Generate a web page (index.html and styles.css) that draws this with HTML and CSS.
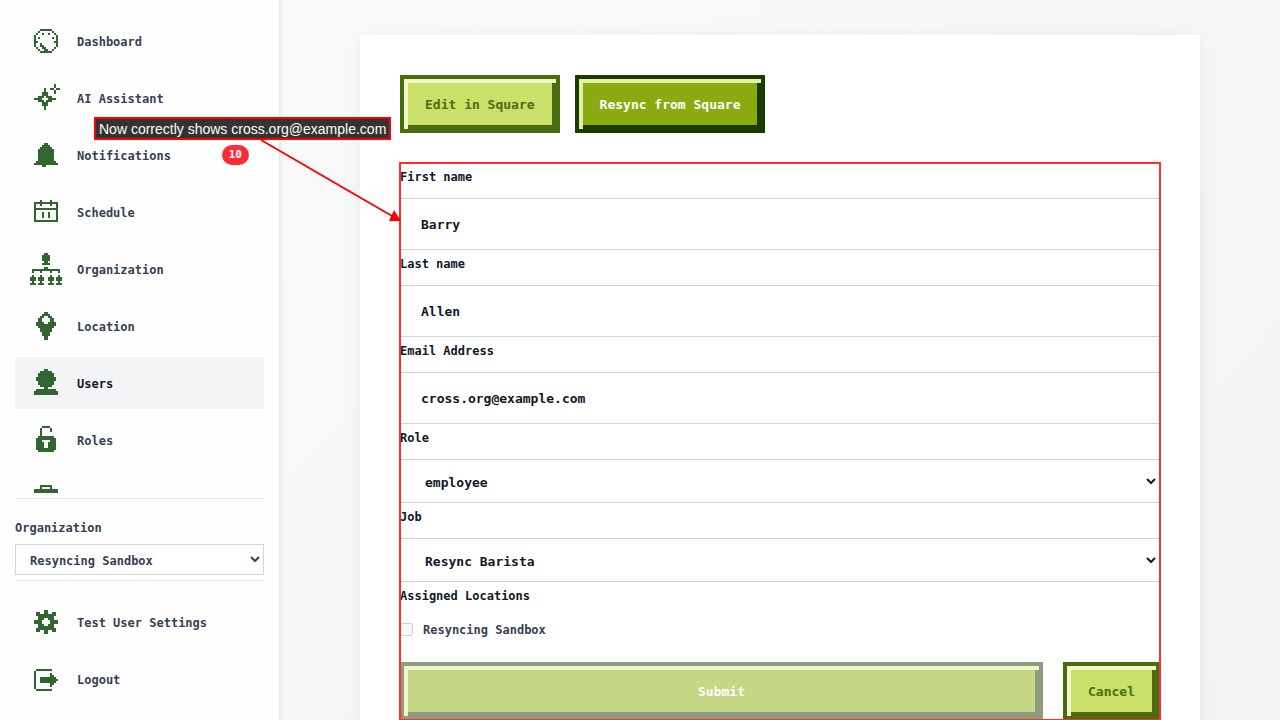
FILE: index.html
```html
<!DOCTYPE html>
<html lang="en">
<head>
    <meta charset="UTF-8">
    <meta name="viewport" content="width=device-width, initial-scale=1.0">
    <title>Edit User</title>
    <link rel="stylesheet" href="styles.css">
</head>
<body>
    <div class="app">
        <!-- Sidebar -->
        <aside class="sidebar">
            <nav class="nav-list">
                <a class="nav-item" href="#">
                    <svg class="icon" viewBox="0 0 16 16"><path d="M5 2h6v1H5zM4 3h1v1H4zM3 4h1v1H3zM11 3h1v1h-1zM12 4h1v1h-1zM2 5h1v6H2zM13 5h1v6h-1zM3 11h1v1H3zM12 11h1v1h-1zM4 12h1v1H4zM11 12h1v1h-1zM5 13h6v1H5zM6 4h1v1H6zM9 4h1v1H9zM4 6h1v1H4zM11 6h1v1h-1zM3 8h1v1H3zM12 8h1v1h-1zM5 9h1v1H5zM5 10h2v1H5zM6 11h2v1H6zM7 12h2v1H7z"/></svg>
                    <span class="nav-text">Dashboard</span>
                </a>
                <a class="nav-item" href="#">
                    <svg class="icon" viewBox="0 0 16 16"><path d="M12 1h1v2h-1zM10 3h2v1h-2zM13 3h2v1h-2zM12 4h1v2h-1zM7 3h1v2H7zM6 5h3v2H6zM4 7h3v1H4zM8 7h3v1H8zM2 8h4v1H2zM9 8h4v1H9zM4 9h3v1H4zM8 9h3v1H8zM6 10h3v2H6zM7 12h1v2H7z"/></svg>
                    <span class="nav-text">AI Assistant</span>
                </a>
                <a class="nav-item" href="#">
                    <svg class="icon" viewBox="0 0 16 16"><path d="M7 2h2v1H7zM6 3h4v1H6zM5 4h6v1H5zM4 5h8v6H4zM3 11h10v1H3zM2 12h12v1H2zM6 13h2v1H6z"/></svg>
                    <span class="nav-text">Notifications</span>
                    <span class="badge">10</span>
                </a>
                <a class="nav-item" href="#">
                    <svg class="icon" viewBox="0 0 16 16"><path d="M2 3h12v1H2zM2 4h1v9H2zM13 4h1v9h-1zM3 12h10v1H3zM3 6h10v1H3zM5 2h1v3H5zM10 2h1v3h-1zM6 8h1v3H6zM9 8h1v3H9z"/></svg>
                    <span class="nav-text">Schedule</span>
                </a>
                <a class="nav-item" href="#">
                    <svg class="icon" viewBox="0 0 16 16"><path d="M7 0h2v1H7zM6 1h4v3H6zM7 4h2v1H7zM6 5h4v1H6zM7 7h2v1H7zM1 8h14v1H1zM1 9h1v1H1zM5 9h1v1H5zM10 9h1v1h-1zM14 9h1v1h-1zM1 11h1v1H1zM5 11h1v1H5zM10 11h1v1h-1zM14 11h1v1h-1zM0 12h3v2H0zM4 12h3v2H4zM9 12h3v2H9zM13 12h3v2h-3zM1 14h1v1H1zM5 14h1v1H5zM10 14h1v1h-1zM14 14h1v1h-1zM0 15h3v1H0zM4 15h3v1H4zM9 15h3v1H9zM13 15h3v1h-3z"/></svg>
                    <span class="nav-text">Organization</span>
                </a>
                <a class="nav-item" href="#">
                    <svg class="icon" viewBox="0 0 16 16"><path d="M7 1h2v1H7zM6 2h4v1H6zM5 3h2v1H5zM9 3h2v1H9zM4 4h2v2H4zM10 4h2v2h-2zM3 6h4v1H3zM9 6h4v1H9zM3 7h10v1H3zM4 8h8v1H4zM5 9h6v2H5zM6 11h4v2H6zM7 13h2v2H7z"/></svg>
                    <span class="nav-text">Location</span>
                </a>
                <a class="nav-item active" href="#">
                    <svg class="icon" viewBox="0 0 16 16"><path d="M7 1h2v1H7zM5 2h6v1H5zM4 3h8v2H4zM3 5h10v2H3zM4 7h8v2H4zM5 9h6v1H5zM7 10h2v1H7zM3 11h10v1H3zM2 12h12v2H2z"/></svg>
                    <span class="nav-text">Users</span>
                </a>
                <a class="nav-item" href="#">
                    <svg class="icon" viewBox="0 0 16 16"><path d="M6 1h4v1H6zM5 2h1v4H5zM10 2h1v2h-1zM4 6h8v1H4zM3 7h10v1H3zM3 8h3v5H3zM10 8h3v5h-3zM6 9h1v4H6zM9 9h1v4H9zM7 12h2v1H7zM4 13h8v1H4z"/></svg>
                    <span class="nav-text">Roles</span>
                </a>
                <a class="nav-item" href="#">
                    <svg class="icon" viewBox="0 0 16 16"><path d="M5 2h6v1H5zM5 3h1v1H5zM10 3h1v1h-1zM2 4h12v9H2z"/></svg>
                </a>
            </nav>

            <div class="org-switch">
                <label for="organization">Organization</label>
                <select id="organization">
                    <option>Resyncing Sandbox</option>
                </select>
            </div>

            <nav class="account">
                <a class="nav-item" href="#">
                    <svg class="icon" viewBox="0 0 16 16"><path fill-rule="evenodd" d="M7 2h2v2h2v-1h2v2h-1v2h2v2h-2v2h1v2h-2v-1H9v2H7v-2H5v1H3v-2h1V9H2V7h2V5H3V3h2v1h2zM7 6v1H6v2h1v1h2V9h1V7H9V6z"/></svg>
                    <span class="nav-text">Test User Settings</span>
                </a>
                <a class="nav-item" href="#">
                    <svg class="icon" viewBox="0 0 16 16"><path d="M3 3h8v1H3zM2 4h1v9H2zM3 13h8v1H3zM5 7h5v3H5zM10 5h1v7h-1zM11 6h1v5h-1zM12 7h1v3h-1zM13 8h1v1h-1z"/></svg>
                    <span class="nav-text">Logout</span>
                </a>
            </nav>
        </aside>

        <!-- User form -->
        <main class="content">
            <section class="card">
                <div class="actions">
                    <button class="btn btn-light" type="button">Edit in Square</button>
                    <button class="btn btn-primary" type="button">Resync from Square</button>
                </div>

                <form class="user-form">
                    <label class="field-label" for="firstName">First name</label>
                    <input class="field" id="firstName" type="text" value="Barry">

                    <label class="field-label" for="lastName">Last name</label>
                    <input class="field" id="lastName" type="text" value="Allen">

                    <label class="field-label" for="email">Email Address</label>
                    <input class="field" id="email" type="text" value="cross.org@example.com">

                    <label class="field-label" for="role">Role</label>
                    <select class="field" id="role">
                        <option>employee</option>
                    </select>

                    <label class="field-label" for="job">Job</label>
                    <select class="field" id="job">
                        <option>Resync Barista</option>
                    </select>

                    <div class="field-label">Assigned Locations</div>
                    <div class="check-row">
                        <input id="sandbox" type="checkbox" disabled>
                        <label for="sandbox">Resyncing Sandbox</label>
                    </div>

                    <div class="form-buttons">
                        <button class="btn btn-primary submit" type="submit" disabled>Submit</button>
                        <button class="btn btn-light" type="button">Cancel</button>
                    </div>
                </form>
            </section>
        </main>
    </div>

    <!-- Callout -->
    <div class="callout">Now correctly shows cross.org@example.com</div>
    <svg class="callout-arrow" viewBox="0 0 142 84">
        <path d="M1 1L132 77" stroke="#ff0000" stroke-width="2"/>
        <path d="M141 82L134 71L129 82z" fill="#ff0000"/>
    </svg>
</body>
</html>
```
FILE: styles.css
```css
* {
    box-sizing: border-box;
}

body {
    margin: 0;
    font-family: "DejaVu Sans Mono", "Liberation Mono", monospace;
    font-size: 12px;
    font-weight: bold;
    color: #364153;
}

.app {
    display: flex;
    height: 100vh;
    overflow: hidden;
    background: linear-gradient(135deg, #f9fafb, #f3f4f6);
}

/* Sidebar */
.sidebar {
    display: flex;
    flex-direction: column;
    flex: 0 0 280px;
    padding: 15px;
    background: #fefefe;
    border-right: 1px solid #e5e7eb;
    box-shadow: 1px 0 4px rgba(0, 0, 0, 0.08);
}

.nav-list,
.account {
    display: flex;
    flex-direction: column;
    gap: 5px;
}

.nav-list {
    flex: 1;
    min-height: 0;
    margin-bottom: 5px;
    overflow: hidden;
}

.nav-item {
    display: flex;
    flex-shrink: 0;
    align-items: center;
    gap: 15px;
    height: 52px;
    padding: 0 15px;
    color: #364153;
    text-decoration: none;
}

.nav-item.active {
    background: #f3f4f6;
    color: #101828;
}

.nav-text {
    padding-top: 2px;
}

.icon {
    width: 32px;
    height: 32px;
    fill: #326531;
    shape-rendering: crispEdges;
}

.badge {
    margin-left: auto;
    padding: 0 7px;
    border-radius: 10px;
    background: #fb2c36;
    color: #fff;
    font-size: 11px;
    line-height: 20px;
}

.org-switch {
    display: flex;
    flex-direction: column;
    padding: 20px 0 5px;
    border-top: 1px solid #e5e7eb;
    border-bottom: 1px solid #e5e7eb;
}

.org-switch label {
    margin-bottom: 7px;
    line-height: 18px;
}

.org-switch select {
    height: 31px;
    padding: 2px 10px 0;
    border: 1px solid #d1d5dc;
    background: #fff;
    color: #364153;
    font: inherit;
}

.account {
    padding-top: 15px;
}

/* Card */
.content {
    flex: 1;
    min-width: 0;
    padding: 35px 80px;
}

.card {
    padding: 40px;
    background: #fff;
    box-shadow: 0 4px 20px rgba(0, 0, 0, 0.06);
}

.actions {
    display: flex;
    gap: 15px;
    margin-bottom: 30px;
}

.btn {
    height: 58px;
    padding: 0 21px;
    border: 4px solid;
    font-family: inherit;
    font-size: 13px;
    font-weight: bold;
}

.btn-light {
    border-color: #496c10;
    background: #c9e069;
    color: #496c10;
    box-shadow: inset 4px 4px #f0f9c8, inset -4px -4px #496c10;
}

.btn-primary {
    border-color: #1b3a00;
    background: #8aab10;
    color: #fff;
    box-shadow: inset 4px 4px #e0efa0, inset -4px -4px #1b3a00;
}

/* Form */
.user-form {
    position: relative;
    display: flex;
    flex-direction: column;
    color: #101828;
}

.user-form::after {
    content: "";
    position: absolute;
    inset: -1px;
    border: 2px solid #ff2d2d;
    pointer-events: none;
}

.field-label {
    height: 35px;
    line-height: 28px;
}

.field {
    width: 100%;
    height: 52px;
    padding: 0 20px;
    border: 1px solid #d1d5dc;
    border-radius: 0;
    background: #fff;
    color: #101828;
    font-family: inherit;
    font-size: 13px;
    font-weight: bold;
}

select.field {
    height: 44px;
    padding-top: 2px;
}

.check-row {
    display: flex;
    align-items: center;
    gap: 10px;
    height: 25px;
    margin-bottom: 20px;
    color: #364153;
}

.check-row input {
    width: 13px;
    height: 13px;
    margin: 0;
}

.form-buttons {
    display: flex;
    gap: 20px;
}

.submit {
    flex: 1;
    border-color: #8b9c7f;
    background: #c5d685;
    box-shadow: inset 4px 4px #eff7cf, inset -4px -4px #8b9c7f;
}

/* Callout over the page */
.callout {
    position: absolute;
    top: 117px;
    left: 94px;
    padding: 1px 3px 0;
    border: 2px solid #ff0000;
    background: #333;
    color: #fff;
    font-family: "Liberation Sans", Arial, sans-serif;
    font-size: 14px;
    font-weight: normal;
    line-height: 18px;
    white-space: nowrap;
}

.callout-arrow {
    position: absolute;
    top: 139px;
    left: 260px;
    width: 142px;
    height: 84px;
    pointer-events: none;
}
```
